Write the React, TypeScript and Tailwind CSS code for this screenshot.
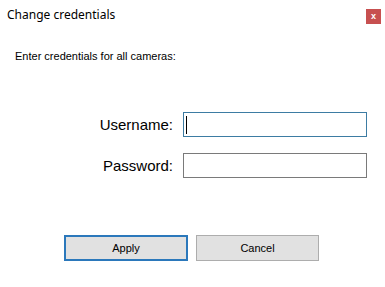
export default function App() {
  return (
    <div className="w-[385px] h-[287px] bg-white flex flex-col font-['Liberation_Sans',Arial,sans-serif] text-black">
      {/* title bar */}
      <div className="flex justify-between pl-[7px] pr-[4px] pt-[7px]">
        <span className="font-['Noto_Sans',sans-serif] text-[12px] leading-[16px]">Change credentials</span>
        <div className="mt-[2px] w-[15px] h-[15px] bg-[#c75050] flex items-center justify-center text-white text-[9px] font-bold leading-none pb-[1px]">
          x
        </div>
      </div>

      <p className="mt-[26px] ml-[15px] text-[11px] leading-[13px]">Enter credentials for all cameras:</p>

      {/* fields */}
      <div className="mt-[49px] flex flex-col gap-[16px]">
        <div className="flex items-center">
          <label className="w-[173px] text-right text-[15px] leading-[18px]">Username:</label>
          <div className="ml-[10px] w-[184px] h-[25px] border border-[#3d7ca3] bg-white flex items-center pl-[2px]">
            <span className="w-[1px] h-[18px] bg-black" />
          </div>
        </div>
        <div className="flex items-center">
          <label className="w-[173px] text-right text-[15px] leading-[18px]">Password:</label>
          <div className="ml-[10px] w-[184px] h-[25px] border border-[#7a7a7a] bg-white" />
        </div>
      </div>

      {/* buttons */}
      <div className="mt-[57px] ml-[64px] flex gap-[8px]">
        <button className="w-[124px] h-[26px] border-2 border-[#2b78bb] bg-[#e1e1e1] text-[11px]">Apply</button>
        <button className="w-[123px] h-[26px] border border-[#adadad] bg-[#e1e1e1] text-[11px]">Cancel</button>
      </div>
    </div>
  );
}
